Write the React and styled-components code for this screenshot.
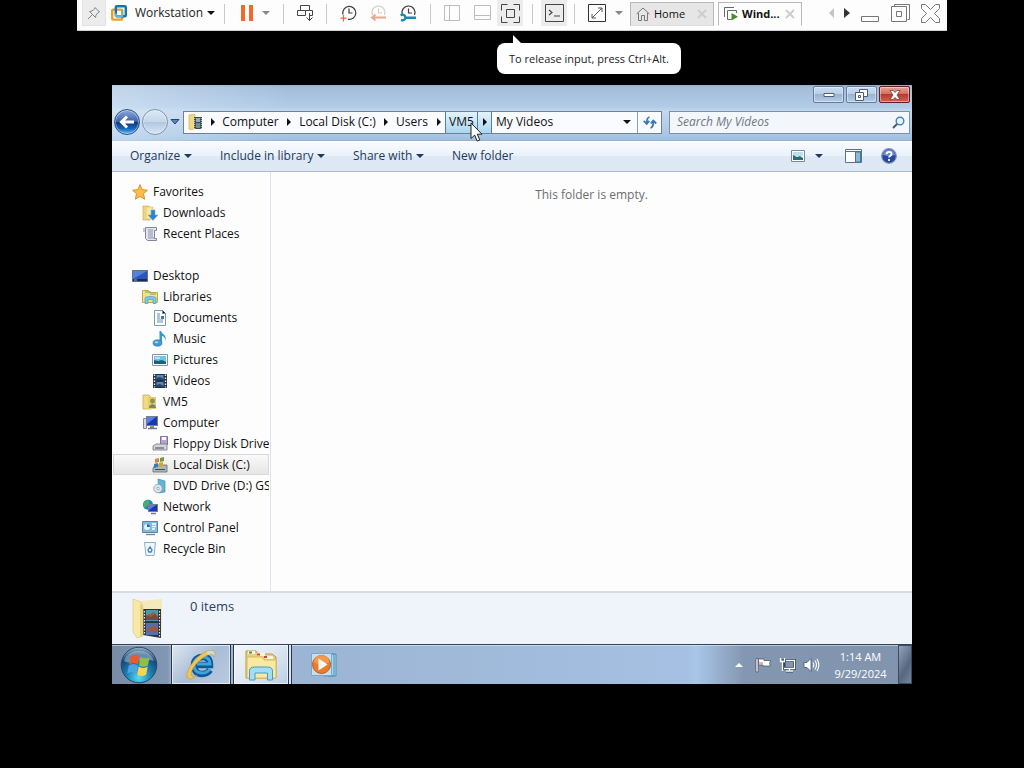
import React from 'react';
import styled, { createGlobalStyle } from 'styled-components';

const GlobalStyle = createGlobalStyle`
  *, *::before, *::after {
    box-sizing: border-box;
  }

  body {
    margin: 0;
    background: #000;
    color: #111;
    font-family: "Open Sans", "Noto Sans", sans-serif;
    font-size: 12px;
    line-height: 16px;
  }

  button, input {
    margin: 0;
    padding: 0;
    border: 0;
    background: none;
    color: inherit;
    font: inherit;
  }

  svg {
    display: block;
    flex: none;
  }

  ul {
    margin: 0;
    padding: 0;
    list-style: none;
  }
`;

const Page = styled.div`
  display: flex;
  flex-direction: column;
  min-height: 100vh;
`;

/* ---------- host toolbar ---------- */

const HostBar = styled.header`
  display: flex;
  height: 31px;
  margin: 0 77px;
  padding: 0 2px 4px 5px;
  background: #fdfdfd;
  border-bottom: 1px solid #d0d0d0;
`;

const HostButton = styled.button`
  position: relative;
  display: flex;
  align-items: center;
  justify-content: center;
  flex: none;
  width: ${({ $width }) => $width || 30}px;
  height: 26px;
  background: ${({ $pressed }) => ($pressed ? '#ececec' : 'transparent')};
  border: ${({ $framed }) => ($framed ? '1px solid #e2e2e2' : '0')};
  border-top: 0;
`;

const MenuButton = styled(HostButton)`
  justify-content: space-between;
  padding: 0 2px 0 5px;
  color: #222;
`;

const MenuLabel = styled.span`
  flex: 1;
  padding-left: 8px;
  text-align: left;
`;

const PauseButton = styled(HostButton)`
  justify-content: space-between;
  padding: 0 6px 0 9px;
`;

const Separator = styled.span`
  flex: none;
  width: ${({ $width }) => $width || 14}px;
  height: 20px;
  margin-top: 4px;
  background: linear-gradient(#c9c9c9, #c9c9c9) center / 1px 100% no-repeat;
`;

const Caret = styled.span`
  flex: none;
  width: 0;
  height: 0;
  border: 4px solid transparent;
  border-top-color: ${({ $color }) => $color || '#111'};
  border-bottom: 0;
`;

const Tabs = styled.div`
  display: flex;
  gap: 4px;
  margin: 2px auto 0 5px;
`;

const Tab = styled.div`
  display: flex;
  align-items: center;
  width: 84px;
  padding: 0 6px 0 5px;
  border: 1px solid #b9b9b9;
  border-bottom-color: ${({ $active }) => ($active ? 'transparent' : '#dcdcdc')};
  background: ${({ $active }) => ($active ? '#fdfdfd' : '#e6e6e6')};
  font-weight: ${({ $active }) => ($active ? 700 : 400)};
`;

const TabLabel = styled.button`
  display: flex;
  align-items: center;
  gap: 4px;
  flex: 1;
  font-size: 11px;
  color: #111;
`;

const Tooltip = styled.div`
  position: absolute;
  top: 43px;
  left: 0;
  z-index: 2;
  padding: 8px 12px 7px;
  border-radius: 8px;
  background: #fff;
  color: #222;
  font-size: 11px;
  white-space: nowrap;

  &::before {
    content: '';
    position: absolute;
    top: -8px;
    left: 16px;
    border-left: 9px solid #fff;
    border-top: 9px solid transparent;
  }
`;

/* ---------- guest desktop ---------- */

const Guest = styled.main`
  display: flex;
  flex-direction: column;
  flex: 1;
  margin: 54px 112px 84px;
  background: #fdfdfd;
`;

const WindowTop = styled.div`
  height: 56px;
  padding: 0 2px;
  background: linear-gradient(90deg, rgba(225, 238, 251, 0.5), rgba(225, 238, 251, 0) 22%),
    linear-gradient(#90aac6 0, #a3bdd9 2px, #b2cce8 22px, #c3d8ec 26px, #a9c6e5 50px, #9fbfe0 55px, #8ea9c4 56px);
`;

const Caption = styled.div`
  display: flex;
  justify-content: flex-end;
  gap: 2px;
  height: 24px;
  padding-top: 1px;
`;

const CaptionButton = styled.button`
  display: flex;
  align-items: center;
  justify-content: center;
  width: 31px;
  height: 17px;
  border: 1px solid ${({ $close }) => ($close ? '#5c2028' : '#667d99')};
  border-radius: 2px;
  box-shadow: inset 0 0 0 1px rgba(255, 255, 255, 0.4);
  background: ${({ $close }) =>
    $close
      ? 'linear-gradient(#e5a398, #d4705f 45%, #b73a2c 50%, #d0664f)'
      : 'linear-gradient(#ccdcee, #b9cee6 45%, #9bb4d2 50%, #b5cce6)'};
`;

const AddressRow = styled.div`
  display: flex;
  align-items: center;
`;

const NavPair = styled.div`
  display: flex;
  align-items: center;
  gap: 2px;
  width: 69px;
`;

const RoundButton = styled.button`
  display: flex;
  align-items: center;
  justify-content: center;
  width: 26px;
  height: 26px;
  border: 1px solid ${({ $disabled }) => ($disabled ? '#7f94ae' : '#33517e')};
  border-radius: 50%;
  box-shadow: inset 0 0 0 1px rgba(255, 255, 255, 0.45);
  background: ${({ $disabled }) =>
    $disabled
      ? 'linear-gradient(#dde8f5, #c5d6ea 50%, #b3c8df 52%, #d8e6f4)'
      : 'linear-gradient(#8cabda, #3c63b0 48%, #103581 52%, #1d66bd 78%, #52c5f5)'};
`;

const AddressBox = styled.nav`
  display: flex;
  align-items: stretch;
  flex: 1;
  height: 23px;
  border: 1px solid #6d8199;
  background: #f9fbfe;
`;

const Crumb = styled.button`
  position: relative;
  display: flex;
  align-items: center;
  justify-content: center;
  width: ${({ $width }) => $width}px;
  color: #111;
  background: ${({ $hot }) => ($hot ? 'linear-gradient(#e3f3fc, #c7e5f7 50%, #a8d6f0)' : 'transparent')};
  border: solid ${({ $hot }) => ($hot ? '#54809f' : 'transparent')};
  border-width: 0 0 0 1px;
`;

const CurrentFolder = styled.span`
  display: flex;
  align-items: center;
  justify-content: space-between;
  flex: 1;
  padding: 0 6px 0 4px;
  border-left: 1px solid #54809f;
`;

const Refresh = styled.button`
  display: flex;
  align-items: center;
  justify-content: center;
  width: 24px;
  border-left: 1px solid #8b9db3;
`;

const Cursor = styled.svg`
  position: absolute;
  top: 10px;
  left: 24px;
  z-index: 1;
`;

const SearchBox = styled.label`
  display: flex;
  align-items: center;
  width: 241px;
  height: 23px;
  margin-left: 7px;
  padding: 0 4px 0 7px;
  border: 1px solid #7d91a8;
  background: #f3f7fc;
`;

const SearchInput = styled.input`
  flex: 1;
  min-width: 0;
  outline: 0;

  &::placeholder {
    color: #707780;
    font-style: italic;
    opacity: 1;
  }
`;

const CommandBar = styled.div`
  display: flex;
  align-items: center;
  height: 31px;
  padding: 0 12px 0 18px;
  border-bottom: 1px solid #a9bacd;
  background: linear-gradient(#fafcfe, #e9f1fa 50%, #dde8f5 52%, #dfe9f6);
  color: #1e395b;
`;

const Command = styled.button`
  display: flex;
  align-items: center;
  gap: 4px;
  width: ${({ $width }) => $width}px;
`;

const CommandIcons = styled.div`
  display: flex;
  align-items: center;
  margin-left: auto;
`;

const IconButton = styled.button`
  display: flex;
  align-items: center;
  justify-content: center;
  width: ${({ $width }) => $width}px;
  height: 22px;
`;

const Content = styled.div`
  display: flex;
  flex: 1;
`;

const Sidebar = styled.aside`
  width: 159px;
  flex: none;
  padding: 9px 1px 0;
  border-right: 1px solid #dde4ee;
`;

const TreeItem = styled.li`
  margin-bottom: ${({ $spaced }) => ($spaced ? 21 : 0)}px;
`;

const TreeButton = styled.button`
  display: flex;
  align-items: center;
  gap: 5px;
  width: 100%;
  height: 21px;
  padding-left: ${({ $level }) => 19 + $level * 10}px;
  overflow: hidden;
  white-space: nowrap;
  color: #111;
  box-shadow: ${({ $selected }) => ($selected ? 'inset 0 0 0 1px #d9d9d9' : 'none')};
  background: ${({ $selected }) => ($selected ? 'linear-gradient(#fafafa, #e5e5e5)' : 'transparent')};
`;

const FolderView = styled.section`
  flex: 1;
  padding: 15px 0;
  text-align: center;
  color: #6d6d6d;
`;

const Details = styled.footer`
  display: flex;
  gap: 22px;
  height: 53px;
  padding: 5px 16px 0;
  border-top: 2px solid #d4dce4;
  background: #eff4fa;
  color: #2b3e5e;
  font-size: 13px;
`;

/* ---------- taskbar ---------- */

const Taskbar = styled.div`
  display: flex;
  height: 40px;
  border-top: 1px solid #2f435c;
  background: linear-gradient(90deg, #788ca8, #8297b3 56px, #a1b7d4 60px, #9db5d4 200px, #a5c0e2 72%, #a9c6e8 73%, #8397b1 79%, #8094ae);
  box-shadow: inset 0 1px 0 rgba(255, 255, 255, 0.45);
`;

const StartButton = styled.button`
  width: 59px;
  padding-left: 8px;
`;

const TaskButton = styled.button`
  display: flex;
  align-items: center;
  justify-content: center;
  width: ${({ $width }) => $width || 60}px;
  margin-right: 2px;
  border: solid #26364d;
  border-width: ${({ $running }) => ($running ? '0 1px' : '0')};
  box-shadow: ${({ $running }) => ($running ? 'inset 0 0 0 1px rgba(255, 255, 255, 0.6)' : 'none')};
  background: ${({ $running, $active }) => {
    if ($active) return 'linear-gradient(135deg, #f4f7fb, #d9e4f1 60%, #bccde2)';
    return $running ? 'linear-gradient(135deg, #dfe7f1, #a9bdd6 50%, #b9cbe2)' : 'none';
  }};
`;

const StackEdge = styled.span`
  width: 3px;
  margin-left: -2px;
  border-right: 1px solid #26364d;
  background: #dce6f2;
`;

const Tray = styled.div`
  display: flex;
  align-items: center;
  margin-left: auto;
  color: #fff;
`;

const Clock = styled.time`
  width: 75px;
  font-size: 11px;
  line-height: 17px;
  text-align: center;
`;

const ShowDesktop = styled.button`
  align-self: stretch;
  width: 14px;
  border: 1px solid #3d4c61;
  background: linear-gradient(120deg, #93a4ba, #56677f 60%, #74859c);
`;

/* ---------- toolbar drawings ---------- */

const PinIcon = () => (
  <svg width="14" height="14" viewBox="0 0 14 14" fill="none" stroke="#858585">
    <path d="M8 1.5 12.5 6 11 6.5 9 9l-.5 2.5-6-6L5 5l2.5-2zM5 9l-4 4" />
  </svg>
);

const VmwareLogo = () => (
  <svg width="16" height="16" viewBox="0 0 16 16" fill="none" strokeWidth="2.4">
    <rect x="1.2" y="4.600" width="10" height="10" rx="1" stroke="#f09a28" />
    <rect x="4.800" y="1.2" width="10" height="10" rx="1" stroke="#14799f" />
    <path d="M4.800 8.500V11.200h6.400V5" stroke="#68b9cc" strokeWidth="1.800" />
  </svg>
);

const PauseIcon = () => (
  <svg width="14" height="16" viewBox="0 0 14 16" fill="#ef6a2c">
    <path d="M1 0h4v16H1zM9 0h4v16H9z" />
  </svg>
);

const SendKeysIcon = () => (
  <svg width="18" height="18" viewBox="0 0 18 18" fill="none" stroke="#444">
    <path d="M4.5 6.5v-5h9v5M1.500 6.500h8v5h-8zM9.500 6.500h7v5h-3M13.500 9v8M10.500 13.500l3 3 3-3" />
  </svg>
);

const SnapshotIcon = ({ kind }) => (
  <svg width="17" height="17" viewBox="0 0 17 17" fill="none" stroke={kind === 'revert' ? '#d5cdca' : '#3d3d3d'} strokeWidth="1.2">
    {kind === 'take' && <path d="M3 9.500A6.500 6.500 0 1 1 8 14.300M9 3.500V8h3.500" />}
    {kind === 'take' && <path d="M3.500 10v6.500M.5 13.200h6" stroke="#e86a4a" />}
    {kind !== 'take' && <path d="M2.500 10A6.500 6.500 0 1 1 14.500 10M8.500 3.500V8H12" />}
    {kind === 'revert' && <path d="M16 12.500H2M5.500 9.500 2 12.500l3.500 3" stroke="#f2a48c" strokeWidth="1.800" />}
    {kind === 'manage' && <path d="M.5 10.200c3-1.200 4.500 0 5 2.500H16M1 15c2.500.8 4 0 4.500-2.200" stroke="#188bb4" strokeWidth="2.400" />}
  </svg>
);

const LayoutIcon = ({ bottom }) => (
  <svg width="17" height="16" viewBox="0 0 17 16" fill="none" stroke="#bdbdbd">
    <path d={bottom ? 'M.5.5h16v14H.5zM.5 10.500h16' : 'M.5.5h15v15H.5zM5.500.5v15'} />
  </svg>
);

const FullscreenIcon = () => (
  <svg width="19" height="19" viewBox="0 0 19 19" fill="none" stroke="#444">
    <path d="M.5 6.500V.5h6M12.500.5h6v6M18.500 12.500v6h-6M6.500 18.500h-6v-6M5.500 5.500h8v8h-8z" />
  </svg>
);

const ConsoleIcon = () => (
  <svg width="19" height="18" viewBox="0 0 19 18" fill="none" stroke="#444">
    <path d="M.5.5h18v17H.5z" />
    <path d="M4 6l3 2.500L4 11M9 12h6" strokeWidth="1.200" />
  </svg>
);

const StretchIcon = () => (
  <svg width="18" height="18" viewBox="0 0 18 18" fill="none" stroke="#555">
    <path d="M.5.5h17v17H.5z" stroke="#333" />
    <path d="M4 14 14 4M10 4h4v4M4 10v4h4" />
  </svg>
);

const HomeIcon = () => (
  <svg width="14" height="14" viewBox="0 0 14 14" fill="none" stroke="#777">
    <path d="M.5 7 7 1l6.500 6M2.500 6v7.500h3V8.500h3v5h3V6" />
  </svg>
);

const VmTabIcon = () => (
  <svg width="14" height="14" viewBox="0 0 14 14" fill="none" stroke="#666">
    <path d="M.5 10V.5H10M3.500 12.500v-9h9V6M3.500 12.500h4" />
    <path d="M7.500 6v7.500L14 9.700z" fill="#4e8a2d" stroke="none" />
  </svg>
);

const CrossIcon = () => (
  <svg width="10" height="10" viewBox="0 0 10 10" stroke="#cccccc" strokeWidth="1.800">
    <path d="m1 1 8 8M9 1 1 9" />
  </svg>
);

const ArrowIcon = ({ left, color = '#111' }) => (
  <svg width="6" height="10" viewBox="0 0 6 10" fill={color}>
    <path d={left ? 'M5 1v8L1 5z' : 'M1 1v8l4-4z'} />
  </svg>
);

const HostArrow = ({ left, color }) => (
  <svg width="6" height="12" viewBox="0 0 6 12" fill={color}>
    <path d={left ? 'M6 1v10L1 6z' : 'M0 1v10l6-5z'} />
  </svg>
);

const HostWindowIcon = ({ kind }) => (
  <svg width="19" height="19" viewBox="0 0 19 19" fill="none" stroke="#777">
    {kind === 'min' && <path d="M.5 12.500h17v5H.5z" />}
    {kind === 'restore' && <path d="M3.500 2.500v-2h15v15h-2M.5 2.500h15v15H.5zM5.500 7.500h5v5h-5z" />}
    {kind === 'close' && (
      <path d="M.5.5h4l5 5 5-5h4v4l-5 5 5 5v4h-4l-5-5-5 5h-4v-4l5-5-5-5z" />
    )}
  </svg>
);

/* ---------- explorer drawings ---------- */

const MinimizeGlyph = () => (
  <svg width="12" height="6" viewBox="0 0 12 6">
    <path d="M1 1.500h10v3H1z" fill="#fff" stroke="#4d5f78" />
  </svg>
);

const RestoreGlyph = () => (
  <svg width="13" height="12" viewBox="0 0 13 12" fill="#fff" stroke="#4d5f78">
    <path d="M4.500.5h8v7h-8z" />
    <path d="M.5 3.500h8v8h-8zM3.500 6.500h2v2h-2z" />
  </svg>
);

const CloseGlyph = () => (
  <svg width="12" height="10" viewBox="0 0 12 10">
    <path d="M1 .5h3l2 2 2-2h3L8 5l3 4.500H8l-2-2-2 2H1L4 5z" fill="#fff" stroke="#6b4348" strokeWidth=".8" />
  </svg>
);

const BackGlyph = () => (
  <svg width="16" height="14" viewBox="0 0 16 14" fill="none" stroke="#fff" strokeWidth="3">
    <path d="M15 7H3M8 1.500 2.500 7 8 12.500" />
  </svg>
);

const RecentGlyph = () => (
  <svg width="10" height="6" viewBox="0 0 10 6">
    <path d="M1 .5h8L5 5z" fill="#5f86b8" stroke="#27456f" />
  </svg>
);

const VideoFolderIcon = () => (
  <svg width="16" height="16" viewBox="0 0 16 16">
    <path d="M1 1l6-1v14l-3 2-3-1z" fill="#f1d983" stroke="#c9a951" strokeWidth=".6" />
    <path d="M6 3h8v12H6z" fill="#3b4650" />
    <path d="M8 4h4v4H8z" fill="#8db1a4" />
    <path d="M8 9h4v5H8z" fill="#718f86" />
    <path d="M6.700 4v11M13.300 4v11" stroke="#fff" strokeDasharray="1 1" strokeWidth=".8" />
  </svg>
);

const RefreshIcon = () => (
  <svg width="14" height="14" viewBox="0 0 14 14" fill="none" stroke="#3a78b5" strokeWidth="1.800">
    <path d="M6.500 2C4.500 2.500 3.700 4 3.700 8M.8 5.800l2.900 3 2.500-3" />
    <path d="M7.500 13c2-.5 2.800-2 2.800-6M7.800 8.500l2.500-3 2.900 3" />
  </svg>
);

const SearchIcon = () => (
  <svg width="13" height="13" viewBox="0 0 13 13" fill="none">
    <path d="M5.500 7.500 1 12" stroke="#445b83" strokeWidth="2" />
    <circle cx="8" cy="5" r="3.800" fill="#e7f5ff" stroke="#4383b9" strokeWidth="1.400" />
  </svg>
);

const ViewIcon = () => (
  <svg width="14" height="12" viewBox="0 0 14 12">
    <path d="M.5.5h13v11H.5z" fill="#fff" stroke="#78889c" />
    <path d="M2 2h10v4H2z" fill="#b9dff2" />
    <path d="M2 10V5l4 2 3-1 3 2v2z" fill="#26716d" />
  </svg>
);

const PreviewPaneIcon = () => (
  <svg width="17" height="14" viewBox="0 0 17 14">
    <path d="M.5.5h16v13H.5z" fill="#fff" stroke="#5b718c" />
    <path d="M1 2.500h15" stroke="#5b718c" />
    <path d="M10.500 3h5v10h-5z" fill="#84bddb" stroke="#54738f" />
  </svg>
);

const HelpIcon = () => (
  <svg width="16" height="16" viewBox="0 0 16 16" fill="none">
    <circle cx="8" cy="8" r="7.300" fill="#2746a0" stroke="#8296b8" strokeWidth="1.200" />
    <path d="M2 7a6 5.500 0 0 1 12 0c-4 1.500-8 1.500-12 0z" fill="#6d8bd0" />
    <path d="M5.500 6.300C5.500 3 10.500 3 10.500 6c0 2-2.500 1.800-2.500 3.500M8 11v2" stroke="#fff" strokeWidth="1.800" />
  </svg>
);

const Monitor = ({ x = 0, y = 0, w = 16, h = 10 }) => (
  <g>
    <rect x={x + 0.5} y={y + 0.5} width={w - 1} height={h - 1} fill="#1a38b4" stroke="#747f91" />
    <path d={`M${x + 1} ${y + h - 2}L${x + w - 2} ${y + 1}H${x + 1}z`} fill="#5a7ee4" />
  </g>
);

const treeArt = {
  star: <path d="m8 .7 2.200 4.900 5.300.6-4 3.600 1.200 5.400L8 12.500l-4.700 2.700 1.200-5.400-4-3.600 5.300-.6z" fill="#fbbd45" stroke="#d98929" strokeWidth=".9" />,
  downloads: (
    <>
      <path d="M1 1h6l1 2v12H1z" fill="#f1d77b" stroke="#d1ad4e" strokeWidth=".7" />
      <path d="M4 2h7v12H4z" fill="#f9e7a3" stroke="#d9bd68" strokeWidth=".6" />
      <path d="M9 5h4v5h3l-5 5.500L6 10h3z" fill="#2d84cc" stroke="#70b6df" strokeWidth=".6" />
    </>
  ),
  recent: (
    <>
      <path d="M3.500 1.500h11v3h-2v8h2v2H5.500l-2-2z" fill="#e2e4ee" stroke="#83889c" />
      <path d="M1 3h3M1 5h3M6 4h5M6 6h5M6 8h5M6 10h5M6 12h7" stroke="#8c93aa" />
    </>
  ),
  desktop: (
    <>
      <path d="M.5 2.500h15v11H.5z" fill="#2b55bd" stroke="#64718a" />
      <path d="M1 3h14L1 11z" fill="#5680dd" />
      <path d="M1 12h14" stroke="#182a5a" strokeWidth="2" />
      <path d="M2 12h3" stroke="#69c1e7" />
    </>
  ),
  libraries: (
    <>
      <path d="M.5 1.500h6l1 2h8v10H.5z" fill="#f7df8f" stroke="#c7a94d" />
      <path d="M3 3h6M8 5h6" stroke="#61a97e" />
      <path d="M3 14.500V9c0-2 11-2 11 0v5.500h-3v-4H6v4z" fill="#7bc8ed" stroke="#4c9bca" strokeWidth=".7" />
    </>
  ),
  documents: (
    <>
      <path d="M2.500.5h8l3 3v12h-11z" fill="#fff" stroke="#7e9bae" />
      <path d="M10.500.5v3h3M5 4h3M5 6h3M5 8h3M5 10h6M5 12h6" stroke="#638db6" />
      <path d="M9 6h3v3H9z" fill="#4478a4" />
    </>
  ),
  music: (
    <>
      <path d="M9 0c1 4 6 3 4.500 10 0-3-2-5-3.500-5v7H7.500V0z" fill="#3198d4" />
      <ellipse cx="5.500" cy="12" rx="4.500" ry="3.200" fill="#3e9ad5" stroke="#2c72ae" strokeWidth=".6" />
      <ellipse cx="4.500" cy="11.300" rx="2" ry="1" fill="#9ddaf4" />
    </>
  ),
  pictures: (
    <>
      <path d="M.5 2.500h15v11H.5z" fill="#fff" stroke="#8493a0" />
      <path d="M2 4h12v8H2z" fill="#73c2e2" />
      <path d="M2 12V8l4 1 4-1 4 2v2z" fill="#176182" />
      <path d="M3 6h5" stroke="#fff" />
    </>
  ),
  videos: (
    <>
      <path d="M1 1h14v14H1z" fill="#27313e" />
      <path d="M4.500 2h7v5h-7zM4.500 9h7v5h-7z" fill="#5689c1" />
      <path d="M4.500 5 8 4l3.500 2v1h-7zM4.500 12 8 11l3.500 2v1h-7z" fill="#24426f" />
      <path d="M2.500 1.500v13M13.500 1.500v13" stroke="#e5edf2" strokeDasharray="1.500 1.500" strokeWidth="1.400" />
    </>
  ),
  user: (
    <>
      <path d="M1 1h6l2 2v12H1z" fill="#f3da82" stroke="#cfab4e" strokeWidth=".8" />
      <path d="M6 3h8v12H6z" fill="#e7cc6e" />
      <circle cx="10.500" cy="7" r="2.400" fill="#8f8d58" />
      <path d="M7 14c0-5 7-5 7 0z" fill="#718a65" />
    </>
  ),
  computer: (
    <>
      <path d="M1.500 3.500h3v10h-3z" fill="#d8d8e4" stroke="#88879e" />
      <Monitor x={4} y={1} w={12} h={10} />
      <path d="M8 12h4M6 13.500h9" stroke="#71798b" strokeWidth="1.500" />
    </>
  ),
  floppy: (
    <>
      <path d="M8.500.5h7v8h-7z" fill="#b3a4d2" stroke="#82749f" />
      <path d="M10 1h4v3h-4z" fill="#fff" />
      <path d="M1 10l3-2h11v6H1z" fill="#d4d5dc" stroke="#74757e" strokeWidth=".8" />
      <path d="M3 12h9" stroke="#454954" />
    </>
  ),
  disk: (
    <>
      <path d="M1 11l2-3h12v7H1z" fill="#aeb6b5" stroke="#626f70" strokeWidth=".8" />
      <path d="M3 2l4-1v4l-4 1z" fill="#df842c" />
      <path d="M8 1l4-1v4L8 5z" fill="#759936" />
      <path d="M2 7l4-1v4l-4 1z" fill="#377ab6" />
      <path d="M7 6l4-1v4l-4 1z" fill="#d5a42b" />
      <path d="M3 12.500h10" stroke="#38544f" />
    </>
  ),
  dvd: (
    <>
      <path d="M6 1l7 2v11l-6 1z" fill="#63b4d6" stroke="#488caf" strokeWidth=".7" />
      <circle cx="6" cy="10.500" r="4.300" fill="#dbe8ef" stroke="#8099ab" strokeWidth=".8" />
      <circle cx="6" cy="10.500" r="1.300" fill="#fff" stroke="#7892a2" strokeWidth=".7" />
    </>
  ),
  network: (
    <>
      <circle cx="6" cy="5.800" r="5" fill="#1e83bd" />
      <path d="M2 3c2-3 5-2 6 0L6 6 3 9C1 8 1 5 2 3z" fill="#47ad73" />
      <Monitor x={6} y={5} w={10} h={8} />
      <path d="M9 14.500h5" stroke="#747b91" strokeWidth="1.500" />
    </>
  ),
  control: (
    <>
      <path d="M.5 1.500h15v11H.5z" fill="#80bade" stroke="#5e84a3" />
      <circle cx="5" cy="7" r="3" fill="#e4f5fc" />
      <path d="M5 7V4a3 3 0 0 1 3 3z" fill="#2a6cab" />
      <path d="M10 4h4M10 6.500h4M10 9h3" stroke="#fff" strokeWidth="1.300" />
      <path d="M4 14.500h9" stroke="#738a9d" strokeWidth="1.400" />
    </>
  ),
  recycle: (
    <>
      <path d="M2.500 1.500h11l-1.500 13H4z" fill="#eef6fc" stroke="#91aec6" />
      <path d="M6 9l2-3 2 3-1 2H7z" stroke="#3c82c8" fill="none" strokeWidth="1.300" />
    </>
  ),
};

const TreeIcon = ({ name }) => (
  <svg width="16" height="16" viewBox="0 0 16 16">{treeArt[name]}</svg>
);

const BigFolder = () => (
  <svg width="40" height="42" viewBox="0 0 40 42">
    <path d="M12 3 34 1v32l-14 5z" fill="#f3e9bc" />
    <path d="M15 11h18v29l-18-3z" fill="#293640" />
    <path d="M18 12h12v11H18z" fill="#4899aa" />
    <path d="M18 25h12v12H18z" fill="#566db0" />
    <path d="M18 20c3-7 5-2 7-6 3 1 4 4 5 8H18zM19 33c2-6 5-2 7-6l4 4v3z" fill="#a05a3a" />
    <path d="M18 17l5 2 4-3 3 3v3H18z" fill="#824638" />
    <path d="M16.500 13v24M31.500 13v26" stroke="#e9e9e9" strokeWidth="1.200" strokeDasharray="1.500 1.500" />
    <path d="M5 1l8 3 2 5v29L9 40 5 34z" fill="#f7e8a8" stroke="#e0cc80" strokeWidth=".7" />
    <path d="M13 5l2 5v28l-3 1V8z" fill="#e6d07f" />
  </svg>
);

const StartOrb = () => (
  <svg width="38" height="38" viewBox="0 0 38 38">
    <defs>
      <radialGradient id="orb" cx=".5" cy=".85" r=".85">
        <stop offset="0" stopColor="#59dcf2" />
        <stop offset=".4" stopColor="#1a83b5" />
        <stop offset=".75" stopColor="#164876" />
        <stop offset="1" stopColor="#9ab9d0" />
      </radialGradient>
    </defs>
    <circle cx="19" cy="19" r="17.800" fill="url(#orb)" stroke="#2b4665" />
    <path d="M4 15a15.500 14 0 0 1 30 0c-9-4-20 5-30 0z" fill="#c8dcec" opacity=".45" />
    <path d="M11 10c3-2 6-2 8.500 0L18 18.500c-3-2-6-2-9 0z" fill="#e65c2d" />
    <path d="M20.500 11c3 2 6 2 9 0L28 19.200c-3 2-6 2-9 0z" fill="#8cc04a" />
    <path d="M8.800 19.500c3-2 6-2 9 0l-1.500 8c-3-2-6-2-9 0z" fill="#49a5e3" />
    <path d="M18.700 20.500c3 2 6 2 9 0l-1.500 8c-3 2-6 2-9 0z" fill="#ffd34c" />
  </svg>
);

const IeIcon = () => (
  <svg width="34" height="34" viewBox="0 0 34 34" fill="none">
    <path d="M26 22c-2 3-4 4-8 4-6 0-8-4-8-9 0-6 4-8 9-8s7 3 7 8H13" stroke="#125798" strokeWidth="6.500" />
    <path d="M26 21c-2 3-4 4-8 4-6 0-8-4-8-8 0-6 4-8 9-8s7 3 7 7H13" stroke="#3aa6dc" strokeWidth="3" />
    <path d="M4 30C-1 26 12 6 24 3c7-2 8 2 6 6 0-3-2-4-6-2C14 11 4 25 8 28c1 1 3 0 5-1-4 4-7 5-9 3z" fill="#f0c554" stroke="#bd9540" strokeWidth=".6" />
    <path d="M22 4c7-3 10 0 8 5 0-3-2-4-6-2z" fill="#d5d9cb" />
  </svg>
);

const ExplorerIcon = () => (
  <svg width="34" height="32" viewBox="0 0 34 32">
    <path d="M2 5V2h10l2 3h14l4 3v21H2z" fill="#ecd078" stroke="#b8994c" />
    <path d="M4 3.500h7M13 5.500h8M21 8.500h8" stroke="#f8f3dc" strokeWidth="3" />
    <path d="M5 3.500h3" stroke="#4a8a59" strokeWidth="2" />
    <path d="M13 5.500h3M20 8h3" stroke="#c64a35" strokeWidth="2" />
    <path d="M3 8h15l2 3h12v18H3z" fill="#fae99f" stroke="#d5bb66" />
    <path d="M5.500 31v-9c0-3 2-4 5-4h13c3 0 5 1 5 4v9h-5v-7H11v7z" fill="#a6ddf5" stroke="#459bc9" />
  </svg>
);

const MediaIcon = () => (
  <svg width="28" height="26" viewBox="0 0 28 26">
    <path d="M14 2h10v22H14zM18 2h8v22h-8z" fill="#aad6ec" stroke="#4c91b6" />
    <path d="M1.500 1.500h20v22h-20z" fill="#c6dfef" stroke="#7da8c5" />
    <circle cx="11.500" cy="12.500" r="9" fill="#ec7b2b" stroke="#b75c22" />
    <path d="M3.500 10a8 7 0 0 1 16 0c-5 3-11 3-16 0z" fill="#f7a65b" opacity=".7" />
    <path d="M8.500 6.500v12l9-6z" fill="#fff" />
  </svg>
);

const FlagIcon = () => (
  <svg width="16" height="16" viewBox="0 0 16 16">
    <path d="M1 1.500h2V15H1z" fill="#fff" stroke="#3f4d60" strokeWidth=".7" />
    <path d="M3.500 2h5.500v1.500h6.500l-1 3 1 2.500H8V8H3.500z" fill="#fff" stroke="#3f4d60" strokeWidth=".7" />
    <path d="M4 4.500c1.500 1 2.500 0 4 1v2H4z" fill="#d9777b" opacity=".6" />
  </svg>
);

const WiredIcon = () => (
  <svg width="17" height="16" viewBox="0 0 17 16" fill="none">
    <path d="M5 3.500h10.500v8H5zM7 14h7" stroke="#33445a" strokeWidth="3" />
    <path d="M7 3.500h8.500v8H5M7 14h7M10.500 12v2M1.500 1v3.500h4V1M3.500 5v9" stroke="#fff" strokeWidth="1.300" />
  </svg>
);

const VolumeIcon = () => (
  <svg width="17" height="16" viewBox="0 0 17 16" fill="none" stroke="#fff">
    <path d="M1 5.500h3L8 1.500v13l-4-4H1z" fill="#fff" stroke="#3c4b60" strokeWidth=".7" />
    <path d="M10 5.500c1 1.500 1 3.500 0 5M12 3.500c2 3 2 6 0 9M14 2c2.500 4 2.500 8 0 12" strokeWidth="1.100" />
  </svg>
);

const tree = [
  { label: 'Favorites', icon: 'star', level: 0 },
  { label: 'Downloads', icon: 'downloads', level: 1 },
  { label: 'Recent Places', icon: 'recent', level: 1, spaced: true },
  { label: 'Desktop', icon: 'desktop', level: 0 },
  { label: 'Libraries', icon: 'libraries', level: 1 },
  { label: 'Documents', icon: 'documents', level: 2 },
  { label: 'Music', icon: 'music', level: 2 },
  { label: 'Pictures', icon: 'pictures', level: 2 },
  { label: 'Videos', icon: 'videos', level: 2 },
  { label: 'VM5', icon: 'user', level: 1 },
  { label: 'Computer', icon: 'computer', level: 1 },
  { label: 'Floppy Disk Drive (A:)', icon: 'floppy', level: 2 },
  { label: 'Local Disk (C:)', icon: 'disk', level: 2, selected: true },
  { label: 'DVD Drive (D:) GSP1RMCULFRER', icon: 'dvd', level: 2 },
  { label: 'Network', icon: 'network', level: 1 },
  { label: 'Control Panel', icon: 'control', level: 1 },
  { label: 'Recycle Bin', icon: 'recycle', level: 1 },
];

const HostToolbar = () => (
  <HostBar>
    <HostButton $width={24} $pressed $framed aria-label="Pin"><PinIcon /></HostButton>
    <MenuButton $width={111}>
      <VmwareLogo />
      <MenuLabel>Workstation</MenuLabel>
      <Caret />
    </MenuButton>
    <Separator />
    <PauseButton $width={45} aria-label="Suspend">
      <PauseIcon />
      <Caret $color="#888" />
    </PauseButton>
    <Separator />
    <HostButton $width={29} aria-label="Send keys"><SendKeysIcon /></HostButton>
    <Separator />
    <HostButton aria-label="Take snapshot"><SnapshotIcon kind="take" /></HostButton>
    <HostButton aria-label="Revert" disabled><SnapshotIcon kind="revert" /></HostButton>
    <HostButton aria-label="Manage snapshots"><SnapshotIcon kind="manage" /></HostButton>
    <Separator />
    <HostButton aria-label="Library" disabled><LayoutIcon /></HostButton>
    <HostButton aria-label="Thumbnails" disabled><LayoutIcon bottom /></HostButton>
    <HostButton $width={26} $pressed aria-label="Full screen" aria-describedby="release">
      <FullscreenIcon />
      <Tooltip id="release" role="tooltip">To release input, press Ctrl+Alt.</Tooltip>
    </HostButton>
    <Separator $width={18} />
    <HostButton $width={26} $pressed aria-label="Console"><ConsoleIcon /></HostButton>
    <Separator />
    <HostButton $width={32} aria-label="Stretch"><StretchIcon /></HostButton>
    <HostButton $width={12} aria-label="Stretch options"><Caret $color="#888" /></HostButton>
    <Tabs>
      <Tab>
        <TabLabel><HomeIcon />Home</TabLabel>
        <IconButton $width={10} aria-label="Close Home"><CrossIcon /></IconButton>
      </Tab>
      <Tab $active>
        <TabLabel><VmTabIcon />Wind...</TabLabel>
        <IconButton $width={10} aria-label="Close tab"><CrossIcon /></IconButton>
      </Tab>
    </Tabs>
    <HostButton $width={16} aria-label="Previous tab"><HostArrow left color="#c4c4c4" /></HostButton>
    <HostButton $width={16} aria-label="Next tab"><HostArrow color="#333" /></HostButton>
    <HostButton aria-label="Minimize"><HostWindowIcon kind="min" /></HostButton>
    <HostButton aria-label="Restore"><HostWindowIcon kind="restore" /></HostButton>
    <HostButton aria-label="Close"><HostWindowIcon kind="close" /></HostButton>
  </HostBar>
);

const AddressBar = () => (
  <AddressRow>
    <NavPair>
      <RoundButton aria-label="Back"><BackGlyph /></RoundButton>
      <RoundButton $disabled disabled aria-label="Forward" />
      <IconButton $width={10} aria-label="Recent pages"><RecentGlyph /></IconButton>
    </NavPair>
    <AddressBox aria-label="Address">
      <Crumb $width={22} aria-label="Folder"><VideoFolderIcon /></Crumb>
      <Crumb $width={12} aria-label="Expand"><ArrowIcon /></Crumb>
      <Crumb $width={64}>Computer</Crumb>
      <Crumb $width={13} aria-label="Expand Computer"><ArrowIcon /></Crumb>
      <Crumb $width={84}>Local Disk (C:)</Crumb>
      <Crumb $width={13} aria-label="Expand Local Disk"><ArrowIcon /></Crumb>
      <Crumb $width={39}>Users</Crumb>
      <Crumb $width={14} aria-label="Expand Users"><ArrowIcon /></Crumb>
      <Crumb $width={32} $hot>
        VM5
        <Cursor width="13" height="21" viewBox="0 0 13 21">
          <path d="M1 1v15.500l3.700-3.400 2.500 6 2.600-1.100-2.500-5.800H12z" fill="#fff" stroke="#222" />
        </Cursor>
      </Crumb>
      <Crumb $width={14} $hot aria-label="Expand VM5"><ArrowIcon /></Crumb>
      <CurrentFolder>
        My Videos
        <IconButton $width={8} aria-label="Previous locations"><Caret /></IconButton>
      </CurrentFolder>
      <Refresh aria-label="Refresh"><RefreshIcon /></Refresh>
    </AddressBox>
    <SearchBox>
      <SearchInput type="text" placeholder="Search My Videos" aria-label="Search My Videos" />
      <SearchIcon />
    </SearchBox>
  </AddressRow>
);

export default function App() {
  return (
    <>
      <GlobalStyle />
      <Page>
        <HostToolbar />
        <Guest>
          <WindowTop>
            <Caption>
              <CaptionButton aria-label="Minimize window"><MinimizeGlyph /></CaptionButton>
              <CaptionButton aria-label="Restore window"><RestoreGlyph /></CaptionButton>
              <CaptionButton $close aria-label="Close window"><CloseGlyph /></CaptionButton>
            </Caption>
            <AddressBar />
          </WindowTop>
          <CommandBar>
            <Command $width={90}>Organize<Caret $color="#1e395b" /></Command>
            <Command $width={133}>Include in library<Caret $color="#1e395b" /></Command>
            <Command $width={99}>Share with<Caret $color="#1e395b" /></Command>
            <Command $width={70}>New folder</Command>
            <CommandIcons>
              <IconButton $width={24} aria-label="Change view"><ViewIcon /></IconButton>
              <IconButton $width={18} aria-label="More views"><Caret $color="#1e395b" /></IconButton>
              <IconButton $width={50} aria-label="Preview pane"><PreviewPaneIcon /></IconButton>
              <IconButton $width={22} aria-label="Help"><HelpIcon /></IconButton>
            </CommandIcons>
          </CommandBar>
          <Content>
            <Sidebar>
              <ul>
                {tree.map(({ label, icon, level, selected, spaced }) => (
                  <TreeItem key={label} $spaced={spaced}>
                    <TreeButton $level={level} $selected={selected}>
                      <TreeIcon name={icon} />
                      {label}
                    </TreeButton>
                  </TreeItem>
                ))}
              </ul>
            </Sidebar>
            <FolderView>This folder is empty.</FolderView>
          </Content>
          <Details>
            <BigFolder />
            <span>0 items</span>
          </Details>
          <Taskbar>
            <StartButton aria-label="Start"><StartOrb /></StartButton>
            <TaskButton $running aria-label="Internet Explorer"><IeIcon /></TaskButton>
            <TaskButton $running $active $width={56} aria-label="Windows Explorer"><ExplorerIcon /></TaskButton>
            <StackEdge />
            <TaskButton $width={64} aria-label="Media Player"><MediaIcon /></TaskButton>
            <Tray>
              <IconButton $width={24} aria-label="Show hidden icons">
                <svg width="8" height="4" viewBox="0 0 8 4"><path d="m0 4 4-4 4 4z" fill="#fff" /></svg>
              </IconButton>
              <IconButton $width={24} aria-label="Action Center"><FlagIcon /></IconButton>
              <IconButton $width={24} aria-label="Network status"><WiredIcon /></IconButton>
              <IconButton $width={24} aria-label="Volume"><VolumeIcon /></IconButton>
              <Clock>
                1:14 AM
                <br />
                9/29/2024
              </Clock>
              <ShowDesktop aria-label="Show desktop" />
            </Tray>
          </Taskbar>
        </Guest>
      </Page>
    </>
  );
}
